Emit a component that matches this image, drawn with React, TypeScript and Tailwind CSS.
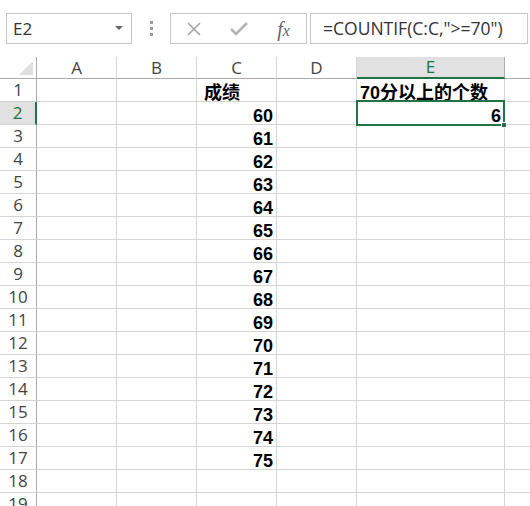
import React from "react";

const cols = [
  { name: "A", w: "w-[80px]" },
  { name: "B", w: "w-[80px]" },
  { name: "C", w: "w-[80px]" },
  { name: "D", w: "w-[80px]" },
  { name: "E", w: "w-[148px]" },
  { name: "F", w: "w-[80px]" },
];

const data: Record<number, Record<string, string>> = {
  1: { C: "成绩", E: "70分以上的个数" },
};
for (let i = 2; i <= 17; i++) {
  data[i] = { ...(data[i] || {}), C: String(58 + i) };
}
data[2].E = "6";

function Cell({ row, col, w }: { row: number; col: string; w: string }) {
  const v = data[row]?.[col];
  const isText = row === 1;
  const selected = row === 2 && col === "E";
  const pad = isText ? (col === "C" ? "justify-start pl-[7px]" : "justify-start pl-[3px]") : "justify-end pr-[3px]";
  return (
    <div
      className={`${w} shrink-0 h-[23px] border-r border-b border-[#d4d4d4] relative flex items-end overflow-visible ${pad}`}
    >
      {v && (
        <span
          className="font-bold text-[18px] leading-[16px] text-black whitespace-nowrap relative z-10"
          style={{ fontFamily: '"Liberation Sans", "Noto Sans CJK SC", sans-serif' }}
        >
          {v}
        </span>
      )}
      {selected && (
        <div className="absolute left-[-1px] top-[-2px] right-[-1px] bottom-[-2px] border-2 border-[#217346] z-20">
          <div className="absolute right-[-4px] bottom-[-4px] w-[6px] h-[6px] bg-[#217346] border border-white" />
        </div>
      )}
    </div>
  );
}

export default function App() {
  const rows = Array.from({ length: 19 }, (_, i) => i + 1);
  return (
    <div
      className="w-[530px] h-[506px] overflow-hidden bg-white"
      style={{ fontFamily: '"Liberation Sans", "Noto Sans CJK SC", sans-serif' }}
    >
      {/* toolbar */}
      <div className="h-[57px] flex items-start pt-[13px] pl-[6px] pr-[2px]">
        <div className="w-[126px] h-[31px] border border-[#c6c6c6] flex items-center pl-[6px] pr-[8px] justify-between">
          <span className="text-[17px] text-[#333]" style={{ fontFamily: '"Open Sans", sans-serif' }}>E2</span>
          <svg width="8" height="5" viewBox="0 0 8 5">
            <path d="M0 0 L8 0 L4 4 Z" fill="#666" />
          </svg>
        </div>
        <div className="w-[38px] h-[31px] flex items-center justify-center">
          <div className="flex flex-col gap-[3px]">
            <div className="w-[3px] h-[3px] bg-[#9a9a9a]" />
            <div className="w-[3px] h-[3px] bg-[#9a9a9a]" />
            <div className="w-[3px] h-[3px] bg-[#9a9a9a]" />
          </div>
        </div>
        <div className="w-[137px] h-[31px] border border-[#c6c6c6] flex items-center">
          <div className="w-[45px] flex justify-center">
            <svg width="16" height="16" viewBox="0 0 16 16">
              <path d="M2 2 L14 14 M14 2 L2 14" stroke="#a6a6a6" strokeWidth="1.6" />
            </svg>
          </div>
          <div className="w-[45px] flex justify-center">
            <svg width="20" height="16" viewBox="0 0 20 16">
              <path d="M2 8 L7 13 L18 2" stroke="#b3b3b3" strokeWidth="2.6" fill="none" />
            </svg>
          </div>
          <div className="w-[45px] flex justify-center">
            <span
              className="italic text-[20px] text-[#666] leading-none"
              style={{ fontFamily: '"Liberation Serif", serif' }}
            >
              f<span className="text-[16px]">x</span>
            </span>
          </div>
        </div>
        <div className="ml-[3px] flex-1 h-[31px] border border-[#c6c6c6] flex items-center pl-[12px]">
          <span className="text-[17.5px] text-[#333] whitespace-nowrap" style={{ fontFamily: '"Open Sans", sans-serif' }}>
            =COUNTIF(C:C,"&gt;=70")
          </span>
        </div>
      </div>

      {/* column header */}
      <div className="flex h-[22px]">
        <div className="w-[37px] shrink-0 h-[22px] border-r border-b border-[#ababab] relative bg-white">
          <svg className="absolute right-[3px] bottom-[3px]" width="14" height="14" viewBox="0 0 14 14">
            <path d="M14 0 L14 14 L0 14 Z" fill="#dfdfdf" />
          </svg>
        </div>
        {cols.map((c) => {
          const sel = c.name === "E";
          return (
            <div
              key={c.name}
              className={`${c.w} shrink-0 h-[22px] border-r flex items-center justify-center text-[17px] ${
                sel
                  ? "bg-[#e1e1e1] text-[#217346] border-[#ababab] border-b-2 border-b-[#217346]"
                  : "bg-white text-[#444] border-[#d4d4d4] border-b border-b-[#ababab]"
              }`}
              style={{ fontFamily: '"Open Sans", sans-serif' }}
            >
              {c.name === "F" ? "" : c.name}
            </div>
          );
        })}
      </div>

      {/* rows */}
      {rows.map((r) => {
        const sel = r === 2;
        return (
          <div key={r} className="flex h-[23px]">
            <div
              className={`w-[37px] shrink-0 h-[23px] border-b flex items-center justify-center text-[17px] ${
                sel
                  ? "bg-[#e1e1e1] text-[#217346] border-r-2 border-r-[#217346] border-b-[#d4d4d4]"
                  : "bg-white text-[#444] border-r border-r-[#ababab] border-b-[#d4d4d4]"
              }`}
              style={{ fontFamily: '"Open Sans", sans-serif' }}
            >
              {r}
            </div>
            {cols.map((c) => (
              <Cell key={c.name} row={r} col={c.name} w={c.w} />
            ))}
          </div>
        );
      })}
    </div>
  );
}
